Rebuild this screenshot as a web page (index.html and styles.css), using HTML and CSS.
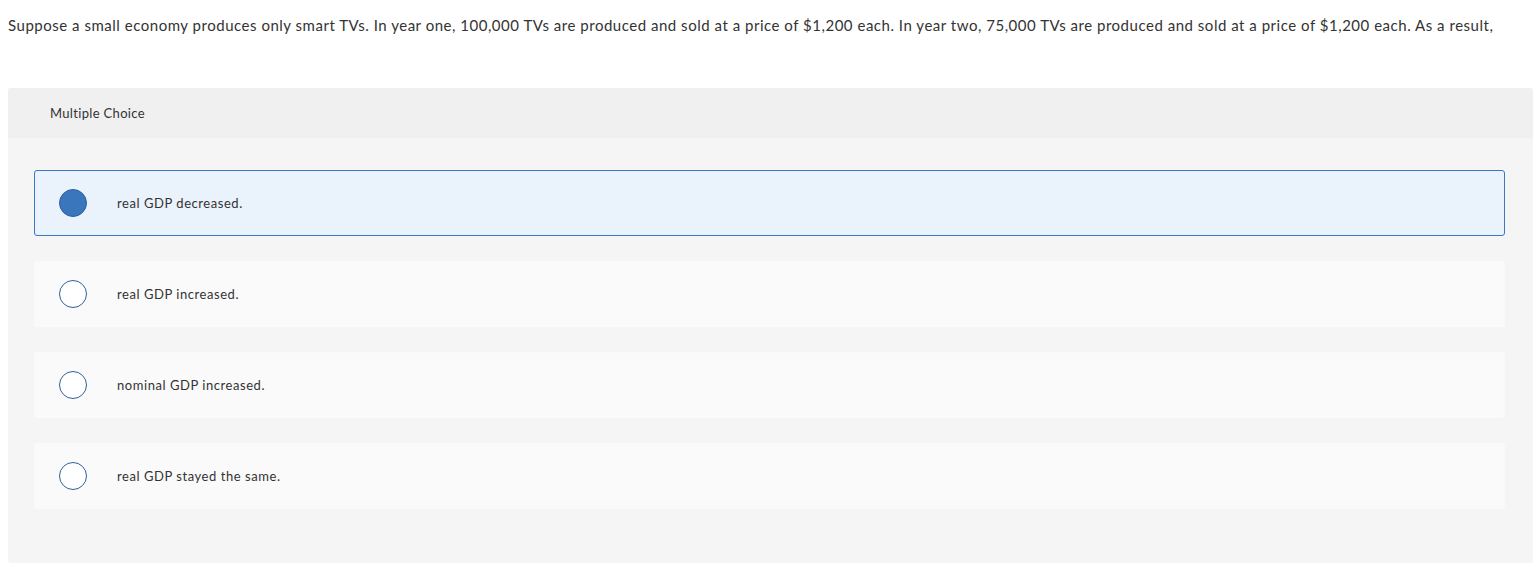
FILE: index.html
```html
<!DOCTYPE html>
<html lang="en">
<head>
<meta charset="utf-8">
<title>Multiple Choice</title>
<link rel="stylesheet" href="styles.css">
</head>
<body>
<p class="question">Suppose a small economy produces only smart TVs. In year one, 100,000 TVs are produced and sold at a price of $1,200 each. In year two, 75,000 TVs are produced and sold at a price of $1,200 each. As a result,</p>
<section class="panel">
  <header class="panel-head">Multiple Choice</header>
  <div class="choices">
    <div class="choice selected"><span class="radio"></span><span class="label">real GDP decreased.</span></div>
    <div class="choice"><span class="radio"></span><span class="label">real GDP increased.</span></div>
    <div class="choice"><span class="radio"></span><span class="label">nominal GDP increased.</span></div>
    <div class="choice"><span class="radio"></span><span class="label">real GDP stayed the same.</span></div>
  </div>
</section>
</body>
</html>
```
FILE: styles.css
```css
html, body { margin: 0; padding: 0; background: #fff; }
body {
  font-family: Lato, "Open Sans", Arial, sans-serif;
  color: #333;
  padding: 0 7px 0 8px;
}
.question {
  margin: 0;
  padding-top: 15px;
  font-size: 15px;
  line-height: 20px;
  height: 73px;
  white-space: nowrap;
  letter-spacing: 0.52px;
}
.panel {
  background: #f5f5f5;
  border-radius: 3px;
  height: 475px;
  overflow: hidden;
}
.panel-head {
  background: #f0f0f0;
  height: 50px;
  display: flex;
  align-items: center;
  padding-left: 42px;
  font-size: 13px;
  letter-spacing: 0.33px;
  color: #333;
}
.choices {
  padding: 32px 28px 0 26px;
  display: flex;
  flex-direction: column;
  gap: 25px;
}
.choice {
  height: 66px;
  box-sizing: border-box;
  background: #fafafa;
  border: 1px solid transparent;
  border-radius: 3px;
  display: flex;
  align-items: center;
  padding-left: 24px;
  font-size: 13px;
  letter-spacing: 0.55px;
}
.choice.selected {
  background: #eaf2fb;
  border-color: #3a78c2;
}
.radio {
  width: 28px;
  height: 28px;
  box-sizing: border-box;
  border-radius: 50%;
  border: 1.5px solid #2f6199;
  background: #fff;
  flex: none;
}
.selected .radio {
  background: #3a76bb;
  border-color: #2d619c;
}
.label { margin-left: 30px; }
```
